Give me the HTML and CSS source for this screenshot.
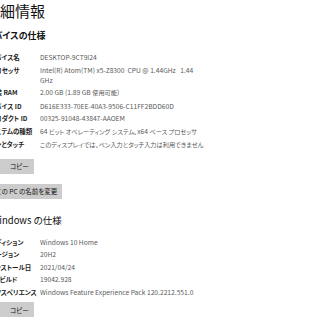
FILE: index.html
```html
<!DOCTYPE html>
<html lang="ja">
<head>
<meta charset="utf-8">
<link rel="stylesheet" href="styles.css">
</head>
<body>
<div class="page">
  <h1 class="title">詳細情報</h1>
  <h2 class="section">デバイスの仕様</h2>
  <div class="specs">
    <div class="row"><div class="label">デバイス名</div><div class="value">DESKTOP-9CT9I24</div></div>
    <div class="row"><div class="label">プロセッサ</div><div class="value">Intel(R) Atom(TM) x5-Z8300&nbsp; CPU @ 1.44GHz&nbsp;&nbsp; 1.44<br>GHz</div></div>
    <div class="row"><div class="label">実装 RAM</div><div class="value">2.00 GB (1.89 GB <span class="ja">使用可能</span>)</div></div>
    <div class="row"><div class="label">デバイス ID</div><div class="value">D616E333-70EE-40A3-9506-C11FF2BDD60D</div></div>
    <div class="row"><div class="label">プロダクト ID</div><div class="value">00325-91048-43847-AAOEM</div></div>
    <div class="row"><div class="label">システムの種類</div><div class="value">64 <span class="ja">ビット オペレーティング システム、</span>x64 <span class="ja">ベース プロセッサ</span></div></div>
    <div class="row"><div class="label">ペンとタッチ</div><div class="value"><span class="ja">このディスプレイでは、ペン入力とタッチ入力は利用できません</span></div></div>
  </div>
  <div class="actions">
    <button class="btn btn-copy">コピー</button>
    <button class="btn btn-rename">この PC の名前を変更</button>
  </div>
  <h2 class="section section-win">Windows の仕様</h2>
  <div class="specs">
    <div class="row"><div class="label">エディション</div><div class="value">Windows 10 Home</div></div>
    <div class="row"><div class="label">バージョン</div><div class="value">20H2</div></div>
    <div class="row"><div class="label">インストール日</div><div class="value">2021/04/24</div></div>
    <div class="row"><div class="label">OS ビルド</div><div class="value">19042.928</div></div>
    <div class="row"><div class="label">エクスペリエンス</div><div class="value">Windows Feature Experience Pack 120.2212.551.0</div></div>
  </div>
  <div class="actions actions-last">
    <button class="btn btn-copy">コピー</button>
  </div>
</div>
</body>
</html>
```

FILE: styles.css
```css
html, body {
  margin: 0;
  padding: 0;
  background: #ffffff;
  overflow: hidden;
}
body {
  font-family: "Noto Sans CJK JP", "Noto Sans", sans-serif;
  font-feature-settings: "palt";
  color: #1a1a1a;
}
.page {
  width: 400px;
}
.title {
  margin: 1px 0 0 -15px;
  font-size: 15px;
  line-height: 20px;
  font-weight: 400;
  color: #111;
}
.section {
  margin: 8px 0 8px -15px;
  font-size: 9px;
  line-height: 14px;
  font-weight: 700;
  color: #111;
}
.section-win {
  margin-top: 14px;
  margin-left: -9px;
  font-weight: 400;
  font-size: 9.5px;
  margin-bottom: 9px;
}
.specs {
  display: flex;
  flex-direction: column;
  margin-left: -11px;
}
.row {
  display: grid;
  grid-template-columns: 51px 1fr;
  padding: 1.25px 0;
  font-size: 6.7px;
  line-height: 10px;
}
.label {
  font-size: 6.5px;
  font-weight: 700;
  color: #1e1e1e;
  white-space: nowrap;
  overflow: hidden;
}
.value {
  color: #5a5a5a;
  white-space: nowrap;
}
.ja {
  font-size: 6.2px;
}
.actions {
  display: flex;
  flex-direction: column;
  align-items: flex-start;
  gap: 10px;
  margin: 7px 0 0 -9px;
}
.actions-last {
  margin-top: 4px;
}
.btn {
  border: none;
  background: #cccccc;
  color: #111;
  font-family: "Noto Sans CJK JP", sans-serif;
  font-feature-settings: "palt";
  font-size: 6.5px;
  line-height: 10px;
  height: 15px;
  padding: 0 5px;
}
.btn-copy {
  min-width: 41px;
  padding-left: 19px;
  text-align: left;
}
```
